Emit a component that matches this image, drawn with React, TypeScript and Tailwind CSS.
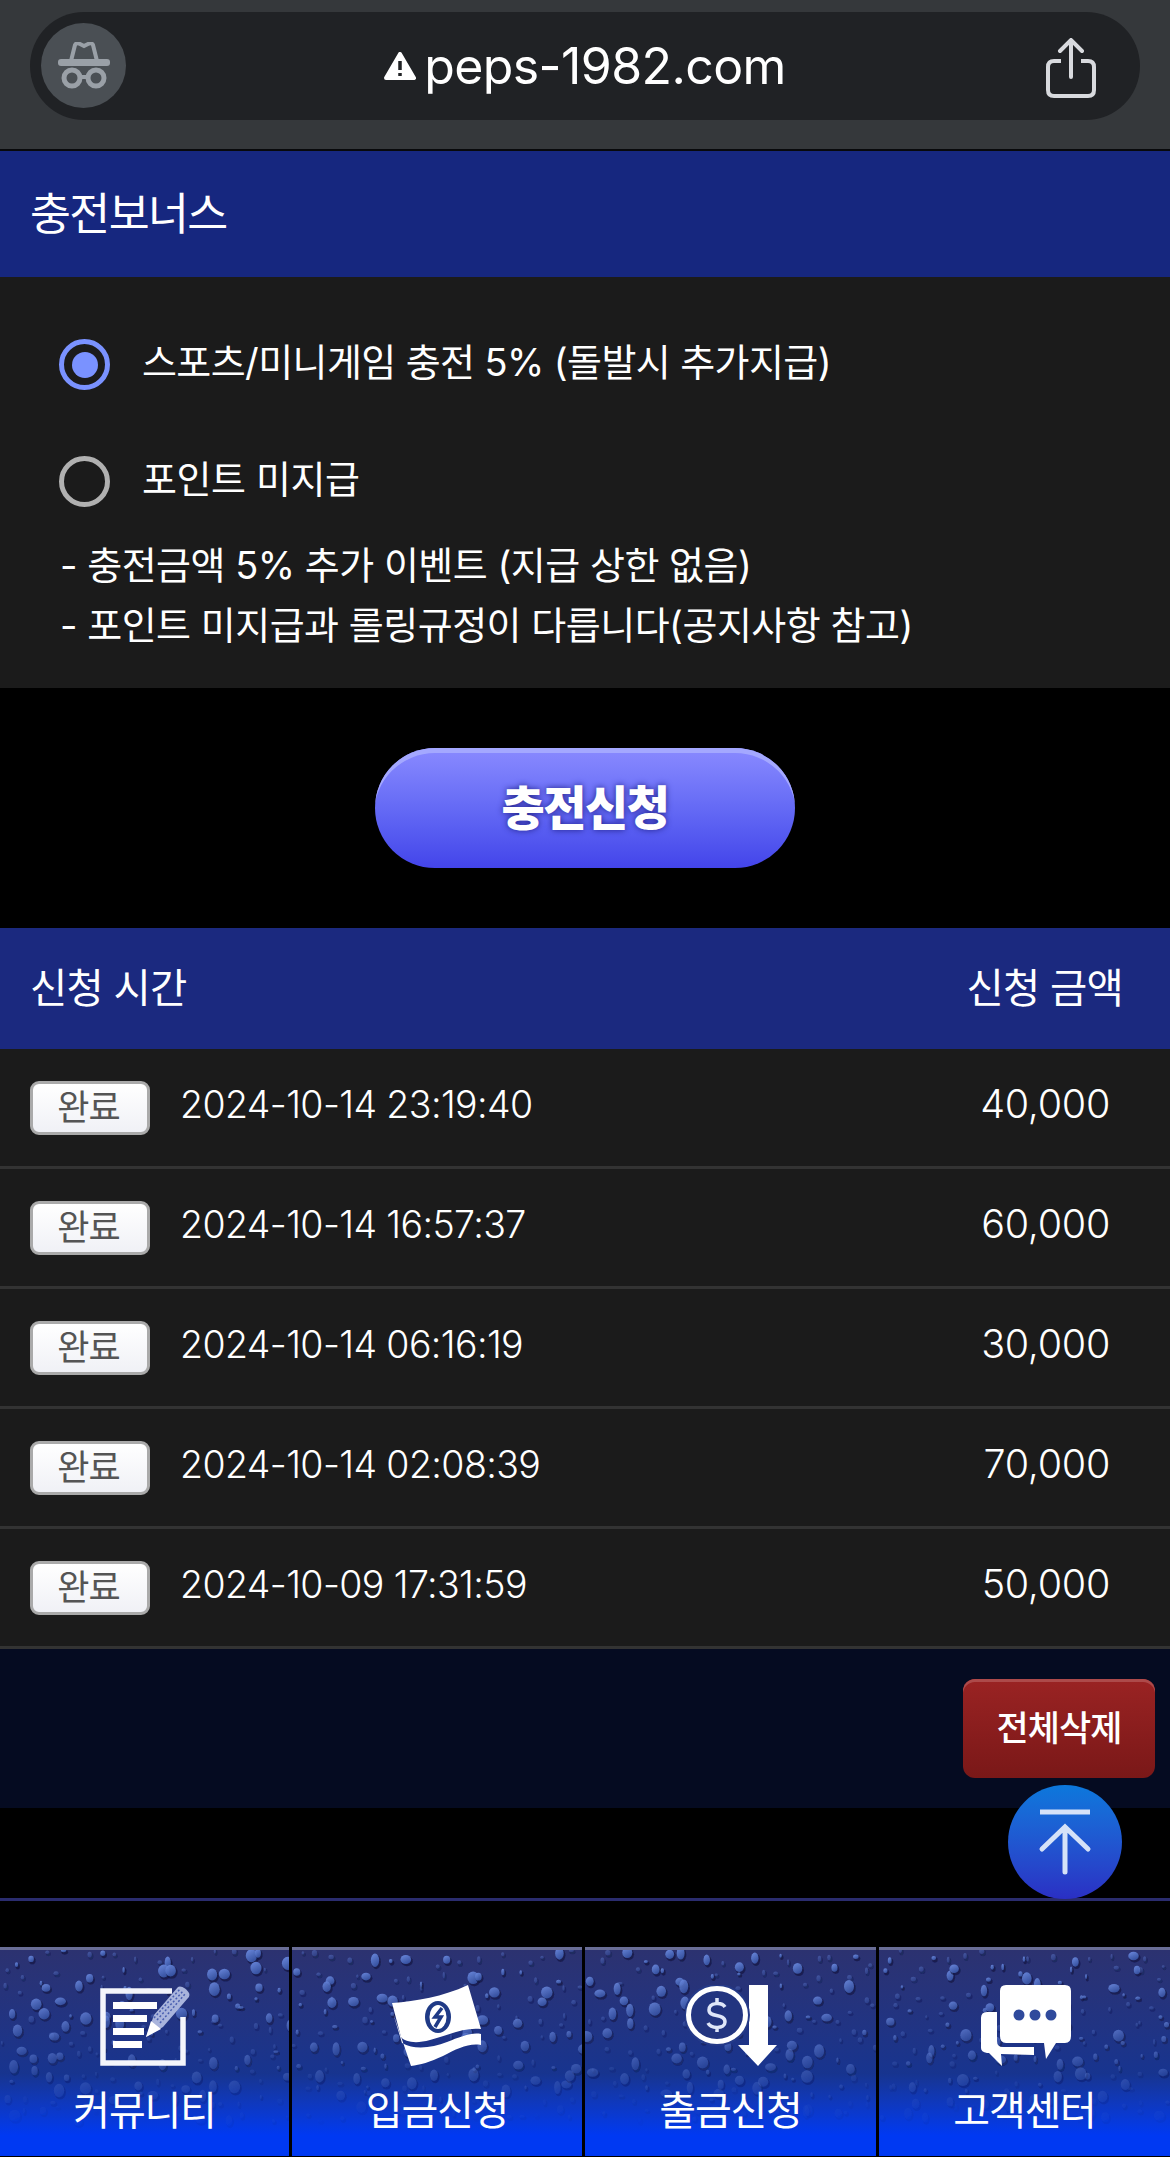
import React from 'react';

const rows = [
  { time: '2024-10-14 23:19:40', amount: '40,000' },
  { time: '2024-10-14 16:57:37', amount: '60,000' },
  { time: '2024-10-14 06:16:19', amount: '30,000' },
  { time: '2024-10-14 02:08:39', amount: '70,000' },
  { time: '2024-10-09 17:31:59', amount: '50,000' },
];

// jittered grid so the drops don't clump
function dropsFor(seed: number) {
  let s = seed;
  const rand = () => {
    s = (s * 16807) % 2147483647;
    return (s - 1) / 2147483646;
  };
  const drops = [];
  for (let row = 0; row < 10; row++) {
    for (let col = 0; col < 16; col++) {
      const big = rand() > 0.66;
      drops.push({
        x: (col + rand()) * 18.5,
        y: (row + rand()) * 17.5,
        rx: big ? 3 + rand() * 3 : 1 + rand() * 1.8,
        ry: big ? 3.8 + rand() * 3.2 : 1.4 + rand() * 2,
        faint: !big && rand() > 0.35,
      });
    }
  }
  return drops;
}

function DropTexture({ seed }: { seed: number }) {
  const id = `drop${seed}`;
  return (
    <svg className="absolute inset-0 h-full w-full" viewBox="0 0 292 210" preserveAspectRatio="none">
      <defs>
        <linearGradient id={id} x1="0.2" y1="0" x2="0.7" y2="1">
          <stop offset="0" stopColor="#6c8be0" />
          <stop offset="1" stopColor="#34509f" />
        </linearGradient>
        <filter id={`${id}soft`}>
          <feGaussianBlur stdDeviation="0.6" />
        </filter>
      </defs>
      <g filter={`url(#${id}soft)`}>
        {dropsFor(seed).map((d, i) => (
          <g key={i} opacity={Math.max(0.06, 0.95 - Math.pow(d.y / 172, 1.8)) * (d.faint ? 0.45 : 1)}>
            <ellipse cx={d.x + 1.2} cy={d.y + 1.8} rx={d.rx + 0.5} ry={d.ry + 0.5} fill="#12153f" opacity={0.7} />
            <ellipse cx={d.x} cy={d.y} rx={d.rx} ry={d.ry} fill={`url(#${id})`} />
          </g>
        ))}
      </g>
    </svg>
  );
}

function CommunityIcon() {
  return (
    <svg width="90" height="81" viewBox="0 0 90 81">
      <path d="M72 6H3v72h80V32" fill="none" stroke="#f4f5fb" strokeWidth="5.5" />
      <g fill="#fff">
        <rect x="13" y="17" width="44" height="7" />
        <rect x="13" y="30" width="34" height="7" />
        <rect x="13" y="43" width="31" height="7" />
        <rect x="13" y="56" width="29" height="7" />
      </g>
      <path d="M46 52 54 30 78 2c3-2 9 2 11 6 1 2 0 4-1 5L63 42Z" fill="#a9b4dc" />
      <path d="M54 33 80 4M60 38 85 9M57 35 83 6" stroke="#4a5fb0" strokeWidth="1.5" strokeDasharray="2 2" />
      <path d="M46 52 51 36 61 44Z" fill="#fff" />
    </svg>
  );
}

function DepositIcon() {
  return (
    <svg width="90" height="81" viewBox="0 0 90 81">
      <path d="M0 18C25 16 50 12 76 0L89 44C72 42 57 50 38 55C24 59 13 57 9 52Z" fill="#fff" />
      <path d="M1 28 10 58C22 65 40 63 55 57C68 52 80 47 89 49V60C76 58 65 64 51 71C38 77 28 80 19 81Z" fill="#fff" />
      <ellipse cx="46" cy="32" rx="13" ry="16" fill="#1f3a86" />
      <ellipse cx="46" cy="32" rx="8.5" ry="12" fill="#fff" />
      <path d="M50 23 43 32H49L43 42" fill="none" stroke="#1f3a86" strokeWidth="3.5" />
    </svg>
  );
}

function WithdrawIcon() {
  return (
    <svg width="92" height="81" viewBox="0 0 92 81">
      <path d="M64 0H83V60H92L73 81 53 60H64Z" fill="#fff" />
      <ellipse cx="32" cy="30" rx="33" ry="31" fill="#253a88" />
      <ellipse cx="32" cy="30" rx="28.5" ry="26.5" fill="#233580" stroke="#fff" strokeWidth="5" />
      <path d="M40 22C37 17 24 17 24 25C24 33 40 28 40 37C40 44 26 44 23 38M32 13V17M32 43V47" fill="none" stroke="#dfe6f8" strokeWidth="3.5" />
    </svg>
  );
}

function SupportIcon() {
  return (
    <svg width="92" height="81" viewBox="0 0 92 81">
      <path d="M18 27H8Q2 27 2 33V63Q2 67 8 68H10L23 81 22 69 55 70V62H24Q18 62 18 56Z" fill="#fff" />
      <path d="M27 0H86Q92 0 92 6V51Q92 58 86 58H77L67 74 65 58H27Q21 58 21 51V6Q21 0 27 0Z" fill="#fff" />
      <circle cx="40" cy="30" r="5.5" fill="#2f4a9c" />
      <circle cx="56" cy="30" r="5.5" fill="#2f4a9c" />
      <circle cx="72" cy="30" r="5.5" fill="#2f4a9c" />
    </svg>
  );
}

const tabs = [
  { label: '커뮤니티', icon: <CommunityIcon />, seed: 4211, width: 'w-[289px]' },
  { label: '입금신청', icon: <DepositIcon />, seed: 9173, width: 'w-[290px]' },
  { label: '출금신청', icon: <WithdrawIcon />, seed: 16033, width: 'w-[291px]' },
  { label: '고객센터', icon: <SupportIcon />, seed: 27449, width: 'w-[291px]' },
];

function TabButton({ label, icon, seed, width }: (typeof tabs)[number]) {
  return (
    <div className={`relative flex h-[209px] flex-col items-center overflow-hidden border-t-[3px] border-[#696d96] bg-gradient-to-b from-[#2c3270] via-[#17348f] via-[60%] to-[#0039f2] to-[90%] ${width}`}>
      <DropTexture seed={seed} />
      <div className="relative mt-[35px] h-[81px]">{icon}</div>
      <span className="relative mt-[22px] text-[40px] leading-[46px] tracking-[-1.2px] text-white">{label}</span>
    </div>
  );
}

export default function App() {
  return (
    <div className="relative flex h-[2157px] w-[1170px] flex-col overflow-hidden bg-black font-[Inter,'Noto_Sans_CJK_KR',sans-serif] text-white">
      <div className="h-[151px] border-b-[2px] border-[#08090b] bg-[#35383b] px-[30px] pt-[12px]">
        <div className="relative flex h-[108px] items-center justify-center rounded-[54px] bg-[#202225]">
          <div className="absolute left-[11px] top-[11px] flex h-[85px] w-[85px] items-center justify-center rounded-full bg-[#4a4f54]">
            <svg width="52" height="48" viewBox="0 0 52 48">
              <path d="M13 19 17 3C18 1 20 1 22 2L26 4 30 2C32 1 34 1 35 3L39 19Z" fill="none" stroke="#9aa0a7" strokeWidth="4" />
              <rect x="0" y="17" width="52" height="7" rx="3" fill="#9aa0a7" />
              <circle cx="14" cy="36" r="8" fill="none" stroke="#9aa0a7" strokeWidth="5" />
              <circle cx="38" cy="36" r="8" fill="none" stroke="#9aa0a7" strokeWidth="5" />
              <path d="M22 35H30" stroke="#9aa0a7" strokeWidth="4" />
            </svg>
          </div>
          <svg width="32" height="29" viewBox="0 0 32 29" className="mr-[8px]">
            <path d="M16 2 30 26H2Z" fill="#fff" stroke="#fff" strokeWidth="4" strokeLinejoin="round" />
            <path d="M16 9V18M16 21V24" stroke="#202225" strokeWidth="3.5" />
          </svg>
          <span className="text-[50px] leading-[60px] tracking-[-0.6px] text-white">peps-1982.com</span>
          <svg width="50" height="60" viewBox="0 0 50 60" className="absolute right-[44px] top-[26px]" fill="none" stroke="#d8dade" strokeWidth="4">
            <path d="M15 23H8Q2 23 2 29V52Q2 58 8 58H42Q48 58 48 52V29Q48 23 42 23H35" />
            <path d="M25 39V3M14 13 25 2 36 13" strokeLinecap="round" />
          </svg>
        </div>
      </div>

      <div className="flex h-[126px] items-center bg-[#16277f] px-[30px]">
        <h2 className="text-[44.5px] font-normal tracking-[-1.6px]">충전보너스</h2>
      </div>

      <div className="flex h-[411px] flex-col bg-[#1b1b1b] pl-[59px] pt-[62px]">
        <div className="flex h-[51px] items-center gap-[32px]">
          <span className="flex h-[51px] w-[51px] items-center justify-center rounded-full border-[5px] border-[#7a92ff]">
            <span className="h-[26px] w-[26px] rounded-full bg-[#7a92ff]" />
          </span>
          <span className="mb-[5px] text-[38px] tracking-[-0.6px]">스포츠/미니게임 충전 5% (돌발시 추가지급)</span>
        </div>
        <div className="mt-[66px] flex h-[51px] items-center gap-[32px]">
          <span className="h-[51px] w-[51px] rounded-full border-[5px] border-[#b0b0b0]" />
          <span className="mb-[5px] text-[38px] tracking-[-0.4px]">포인트 미지급</span>
        </div>
        <p className="ml-[1px] mt-[28px] text-[38px] leading-[60px] tracking-[-0.5px]">
          - 충전금액 5% 추가 이벤트 (지급 상한 없음)
          <br />- 포인트 미지급과 롤링규정이 다릅니다(공지사항 참고)
        </p>
      </div>

      <div className="flex h-[240px] items-center justify-center">
        <button className="h-[120px] w-[420px] rounded-[60px] bg-gradient-to-b from-[#8a8aff] to-[#4444ea] text-[47px] font-black tracking-[-1.5px] text-white shadow-[inset_0_6px_0_-1px_#a4a8ff] [text-shadow:0_0_6px_#23238c]">
          충전신청
        </button>
      </div>

      <div className="flex h-[121px] items-center justify-between bg-[#1b297f] pl-[30px] pr-[47px] pt-[2px] text-[40.5px] font-normal tracking-[-0.8px]">
        <span>신청 시간</span>
        <span>신청 금액</span>
      </div>

      {rows.map((row) => (
        <div key={row.time} className="flex h-[120px] items-center border-b-[3px] border-[#333333] bg-[#1b1b1b] pl-[30px] pr-[60px]">
          <span className="flex h-[54px] w-[120px] items-center justify-center rounded-[9px] border-[3px] border-[#aaaaaa] bg-gradient-to-b from-white to-[#f0f1f6] pr-[3px] text-[35px] tracking-[-1px] text-[#555555]">
            완료
          </span>
          <span className="mb-[5px] ml-[30px] text-[37.5px] font-light tracking-[-0.6px]">{row.time}</span>
          <span className="mb-[5px] ml-auto text-[39.5px] font-light tracking-[-0.3px]">{row.amount}</span>
        </div>
      ))}

      <div className="flex h-[159px] items-start justify-end bg-[#050b21] pr-[15px] pt-[30px]">
        <button className="h-[99px] w-[192px] rounded-[12px] bg-gradient-to-b from-[#9a2323] to-[#7a1818] text-[35px] font-medium tracking-[-1px] text-white shadow-[inset_0_3px_0_#ad4a4a]">
          전체삭제
        </button>
      </div>

      <div className="h-[90px]" />
      <div className="h-[3px] bg-[#2a2c6e]" />
      <div className="h-[46px]" />

      <div className="flex h-[209px] gap-[3px]">
        {tabs.map((tab) => (
          <TabButton key={tab.label} {...tab} />
        ))}
      </div>

      <button className="absolute left-[1008px] top-[1785px] flex h-[114px] w-[114px] items-center justify-center rounded-full bg-gradient-to-b from-[#0b78dc] to-[#2a2fc4]">
        <svg width="54" height="66" viewBox="0 0 54 66" fill="none" stroke="#d5e2f8" strokeWidth="5" strokeLinecap="round">
          <path d="M2 3H52" strokeLinecap="butt" />
          <path d="M27 20V63M4 40 27 18 50 40" />
        </svg>
      </button>
    </div>
  );
}
